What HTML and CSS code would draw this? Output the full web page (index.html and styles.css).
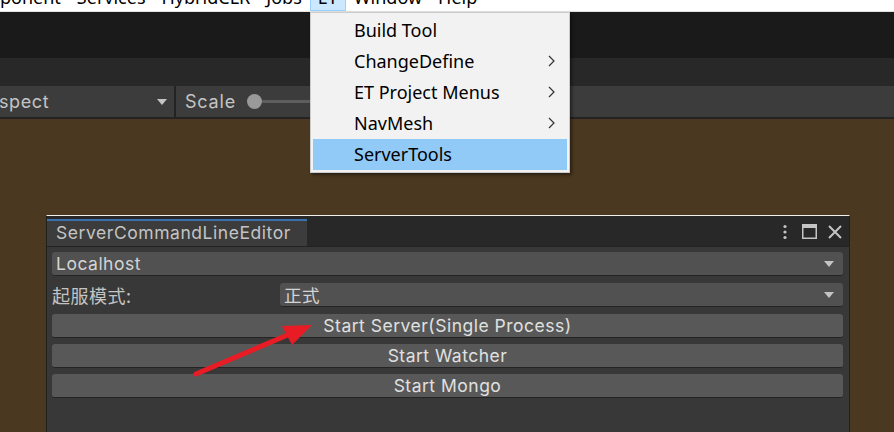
FILE: index.html
```html
<!DOCTYPE html>
<html>
<head>
<meta charset="utf-8">
<link rel="stylesheet" href="styles.css">
</head>
<body>
<div class="menubar">
  <div class="menubar-items">
    <span class="mb-item first">ponent</span>
    <span class="mb-item">Services</span>
    <span class="mb-item">HybridCLR</span>
    <span class="mb-item">Jobs</span>
    <span class="mb-item active">ET</span>
    <span class="mb-item">Window</span>
    <span class="mb-item">Help</span>
  </div>
</div>
<div class="band1"></div>
<div class="band2"></div>
<div class="toolbar">
  <div class="aspect">
    <span class="aspect-text">spect</span>
    <svg class="tri" width="10" height="6" viewBox="0 0 10 6"><polygon points="0,0 10,0 5,6" fill="#c4c4c4"/></svg>
  </div>
  <div class="scale">
    <span class="scale-label">Scale</span>
    <span class="knob"></span>
    <span class="track"></span>
  </div>
</div>
<div class="scene">
  <div class="window">
    <div class="win-header">
      <div class="tab">ServerCommandLineEditor</div>
      <div class="win-icons">
        <svg width="6" height="16" viewBox="0 0 6 16"><circle cx="3" cy="2.5" r="1.6" fill="#c4c4c4"/><circle cx="3" cy="8" r="1.6" fill="#c4c4c4"/><circle cx="3" cy="13.5" r="1.6" fill="#c4c4c4"/></svg>
        <svg width="15" height="15" viewBox="0 0 15 15"><rect x="0.75" y="0.75" width="13.5" height="13.5" fill="none" stroke="#c4c4c4" stroke-width="1.5"/><rect x="0" y="0" width="15" height="4" fill="#c4c4c4"/></svg>
        <svg width="14" height="14" viewBox="0 0 14 14"><path d="M1 1 L13 13 M13 1 L1 13" stroke="#c4c4c4" stroke-width="2"/></svg>
      </div>
    </div>
    <div class="win-body">
      <div class="popup"><span>Localhost</span><svg class="tri" width="10" height="6" viewBox="0 0 10 6"><polygon points="0,0 10,0 5,6" fill="#c4c4c4"/></svg></div>
      <div class="field">
        <span class="label">起服模式:</span>
        <div class="popup grow"><span>正式</span><svg class="tri" width="10" height="6" viewBox="0 0 10 6"><polygon points="0,0 10,0 5,6" fill="#c4c4c4"/></svg></div>
      </div>
      <div class="btn">Start Server(Single Process)</div>
      <div class="btn">Start Watcher</div>
      <div class="btn">Start Mongo</div>
    </div>
  </div>
</div>

<div class="dropmenu">
  <div class="dm-item"><span>Build Tool</span></div>
  <div class="dm-item"><span>ChangeDefine</span><svg width="7" height="12" viewBox="0 0 7 12"><path d="M1 1 L6 6 L1 11" fill="none" stroke="#333" stroke-width="1.2"/></svg></div>
  <div class="dm-item"><span>ET Project Menus</span><svg width="7" height="12" viewBox="0 0 7 12"><path d="M1 1 L6 6 L1 11" fill="none" stroke="#333" stroke-width="1.2"/></svg></div>
  <div class="dm-item"><span>NavMesh</span><svg width="7" height="12" viewBox="0 0 7 12"><path d="M1 1 L6 6 L1 11" fill="none" stroke="#333" stroke-width="1.2"/></svg></div>
  <div class="dm-item hl"><span>ServerTools</span></div>
</div>

<svg class="arrow" width="894" height="432" viewBox="0 0 894 432">
  <line x1="196" y1="374" x2="290" y2="334" stroke="#e81c24" stroke-width="5" stroke-linecap="round"/>
  <polygon points="312,325 282,326 292,345" fill="#e81c24"/>
</svg>
</body>
</html>
```

FILE: styles.css
```css
* { box-sizing: border-box; }
html, body { margin: 0; padding: 0; }
body {
  width: 894px;
  height: 432px;
  overflow: hidden;
  background: #4b3820;
  font-family: Inter, "Noto Sans", "Noto Sans CJK SC", sans-serif;
  position: relative;
}

.menubar {
  height: 12px;
  background: #fff;
  border-bottom: 1px solid #e3e3e3;
  overflow: hidden;
}
.menubar-items {
  display: flex;
  margin-top: -17px;
  font-family: "Noto Sans", sans-serif;
  font-size: 18px;
  line-height: 26px;
  color: #000;
}
.mb-item {
  padding: 0 7px;
  border: 1px solid transparent;
}
.mb-item.first { margin-left: -8px; }
.mb-item.active {
  background: #cce8ff;
  border-color: #99d1ff;
}

.band1 { height: 46px; background: #1a1a1a; }
.band2 { height: 28px; background: #282828; }
.toolbar {
  height: 33px;
  background: #3c3c3c;
  border-bottom: 2px solid #232323;
  display: flex;
}
.aspect {
  width: 176px;
  border-right: 2px solid #232323;
  display: flex;
  align-items: center;
  justify-content: space-between;
  padding-right: 7px;
  color: #c4c4c4;
  font-size: 18px;
  letter-spacing: 0.6px;
}
.aspect-text { margin-left: -1px; }
.scale {
  display: flex;
  align-items: center;
  padding-left: 9px;
  color: #c4c4c4;
  font-size: 18px;
  letter-spacing: 0.8px;
}
.scale-label { margin-right: 11px; }
.knob {
  width: 15px;
  height: 15px;
  border-radius: 50%;
  background: #999;
}
.track {
  width: 80px;
  height: 3px;
  background: #5e5e5e;
}

.scene {
  padding: 95px 0 0 46px;
}
.window {
  width: 804px;
  height: 220px;
  border-top: 1px solid #f0f0f0;
  border-left: 1px solid #202020;
  border-right: 1px solid #202020;
  background: #383838;
  margin-top: 1px;
}
.win-header {
  height: 31px;
  background: #282828;
  display: flex;
  justify-content: space-between;
  border-bottom: 1px solid #232323;
}
.tab {
  margin-top: 3px;
  width: 260px;
  background: #3c3c3c;
  border-top: 2px solid #3a72ad;
  color: #c4c4c4;
  font-size: 17.5px;
  padding-left: 9px;
  line-height: 24px;
  letter-spacing: 0.55px;
}
.win-icons {
  display: flex;
  align-items: center;
  gap: 11px;
  padding-right: 7px;
  padding-top: 1px;
}
.win-icons svg:first-child { margin-right: 3px; }

.win-body {
  padding: 5px 6px 0 5px;
  display: flex;
  flex-direction: column;
  gap: 6px;
}
.popup, .btn {
  height: 24px;
  border-radius: 3px;
  border-bottom: 1px solid #242424;
  color: #d4d4d4;
  font-size: 17.5px;
  letter-spacing: 0.5px;
  display: flex;
  align-items: center;
}
.popup {
  background: #515151;
  justify-content: space-between;
  padding: 0 9px 0 4px;
}
.field {
  display: flex;
  align-items: center;
}
.label {
  width: 228px;
  color: #c4c4c4;
  font-size: 18px;
  letter-spacing: 0.5px;
  font-family: "Noto Sans CJK SC", sans-serif;
}
.grow { flex: 1; }
.btn {
  background: #585858;
  justify-content: center;
  color: #e0e0e0;
}

.dropmenu {
  position: absolute;
  left: 310px;
  top: 12px;
  width: 260px;
  background: #f2f2f2;
  border: 1px solid #cccccc;
  padding: 2px;
  box-shadow: 2px 2px 3px rgba(0,0,0,0.45);
  font-family: "Noto Sans", sans-serif;
  font-size: 18px;
  color: #000;
}
.dm-item {
  height: 31px;
  display: flex;
  align-items: center;
  justify-content: space-between;
  padding: 0 12px 2px 41px;
}
.dm-item.hl { background: #91c9f7; }

.arrow {
  position: absolute;
  left: 0;
  top: 0;
}
```
